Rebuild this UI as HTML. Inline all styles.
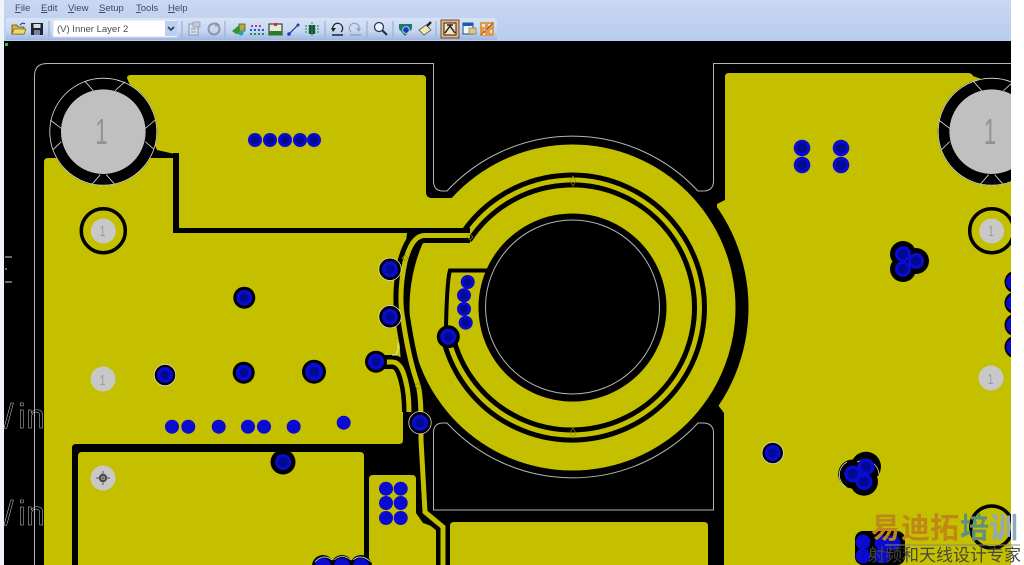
<!DOCTYPE html>
<html><head><meta charset="utf-8"><style>
html,body{margin:0;padding:0;width:1024px;height:565px;overflow:hidden;background:#fff}
svg{display:block}
text{font-family:"Liberation Sans","Noto Sans CJK SC",sans-serif}
</style></head><body>
<svg xmlns="http://www.w3.org/2000/svg" width="1024" height="565" viewBox="0 0 1024 565">
<defs>
<linearGradient id="tb" x1="0" y1="0" x2="0" y2="1"><stop offset="0" stop-color="#d8e3f7"/><stop offset=".6" stop-color="#c6d6f1"/><stop offset="1" stop-color="#9fb7e0"/></linearGradient>
<linearGradient id="mb" x1="0" y1="0" x2="0" y2="1"><stop offset="0" stop-color="#c9d8f2"/><stop offset="1" stop-color="#b9cced"/></linearGradient>
<g id="bigh">
<circle r="54" fill="#000"/>
<circle r="53.5" fill="none" stroke="#e4e4d0" stroke-width=".8"/>
<circle r="42.3" fill="#c0c0c0"/>
<g stroke="#d8d8d8" stroke-width=".8"><path d="M-18-50L-10-41M21.7-50L11.7-41M52-11.7L42-3.3M50 17L42 10M11.7 53L3 43M-11.7 53L-3 43M-53-11.7L-42-3.3M-50 17.7L-42 10"/></g>
</g>
</defs>

<!-- window bg -->
<rect width="1024" height="565" fill="#fff"/>
<rect width="1011" height="41" fill="url(#mb)"/>
<rect width="4" height="565" fill="#eef3fc"/>

<!-- canvas -->
<rect x="4" y="41" width="1007" height="524" fill="#000"/>
<rect x="5" y="43" width="3" height="3" fill="#22cc22"/>

<!-- yellow copper -->
<g fill="#c4c000">
<path d="M725 77Q725 73 729 73H968Q972 73 973 76L1011 90V565H724V413L718 405L717 204L725 200Z"/>
<circle cx="572.5" cy="307.5" r="176" fill="#000"/>
<path d="M131 75H422Q426 75 426 79V192Q426 198 432 198H470V228H179V155L157 150L127 78Q127 75 131 75Z"/>
<path d="M48 158H173V233H407L400 300L400 350L403 387L403 440Q403 444 399 444H76Q72 444 72 448V565H44V162Q44 158 48 158Z"/>
<path d="M82 452H360Q364 452 364 456V565H78V456Q78 452 82 452Z"/>
<path d="M373 475H412Q416 475 416 479V513L423 523L437 528V565H369V479Q369 475 373 475Z"/>
<path d="M454 522H704Q708 522 708 526V565H450V526Q450 522 454 522Z"/>
<circle cx="572.5" cy="307.5" r="163"/>
</g>

<!-- black separators -->
<path d="M176 230.5H420" stroke="#000" stroke-width="5" fill="none"/>
<path d="M176 153V232" stroke="#000" stroke-width="6" fill="none"/>
<path d="M470 235.5H425Q412 235 405 262Q398 295 403 320Q409 360 418 385Q421 395 421 422" stroke="#000" stroke-width="15" fill="none"/>
<path d="M376 362H392Q400 362 404 375Q409 390 409 412" stroke="#000" stroke-width="14" fill="none"/>
<path d="M421 422V440L425 512L443 527V565" stroke="#000" stroke-width="14" fill="none"/>
<path d="M442.8 337.2A132.5 132.5 0 1 0 463.8 231" stroke="#000" stroke-width="5" fill="none"/>
<path d="M452.6 334.9A122.5 122.5 0 1 0 469.4 240.5" stroke="#000" stroke-width="5" fill="none"/>
<path d="M487 270.5H450Q447 280 446 327" stroke="#000" stroke-width="4" fill="none"/>
<circle cx="572.5" cy="307.5" r="94" fill="#000"/>

<!-- thin traces -->
<path d="M470 235.5H425Q412 235 405 262Q398 295 403 320Q409 360 418 385Q421 395 421 422" stroke="#c4c000" stroke-width="5" fill="none"/>
<path d="M376 362H392Q400 362 404 375Q409 390 409 412" stroke="#c4c000" stroke-width="5" fill="none"/>
<path d="M421 422V440L425 512L443 527V565" stroke="#c4c000" stroke-width="5" fill="none"/>

<!-- outline -->
<g fill="none" stroke="#b4b4b4" stroke-width="1">
<path d="M34.5 565V76Q34.5 63.5 47 63.5H433.5V181Q433.5 191 443 191H447A171 171 0 0 1 698 191H703Q713.5 191 713.5 181V63.5H1011"/>
<path d="M698 423A171 171 0 0 1 447 423H443Q433.5 423 433.5 433V510H713.5V433Q713.5 423 703 423Z"/>
<circle cx="572.5" cy="307" r="87"/>
</g>
<!-- diamonds -->
<g fill="none" stroke="#8a8a20" stroke-width=".7">
<path d="M573 176L576 181L573 186L570 181Z"/><path d="M573 428L576 433L573 438L570 433Z"/>
<path d="M470 234L473 237L470 240L467 237Z"/>
<path d="M418 383L421 386L418 389L415 386Z"/><path d="M405 255L408 258L405 261L402 258Z"/>
</g>
<path d="M398 343V350L396 355H392" fill="none" stroke="#e8e8e8" stroke-width="1"/>

<!-- holes -->
<use href="#bigh" x="103.3" y="131.7"/>
<use href="#bigh" x="991.7" y="131.7"/>
<text transform="translate(101.5 144) scale(.62 1)" font-size="36" fill="#929292" text-anchor="middle">1</text>
<text transform="translate(990 144) scale(.62 1)" font-size="36" fill="#929292" text-anchor="middle">1</text>

<g fill="none" stroke="#000" stroke-width="3.5">
<circle cx="103.3" cy="230.7" r="22"/><circle cx="991.7" cy="230.7" r="22"/>
<circle cx="991.7" cy="527" r="21"/>
</g>
<g fill="#c8c8c8">
<circle cx="103.3" cy="231" r="12.5"/><circle cx="991.7" cy="231" r="12.5"/>
<circle cx="103" cy="379" r="12.5"/><circle cx="991" cy="378" r="12.5"/>
<circle cx="103" cy="478" r="12.5"/>
</g>
<g fill="#9a9a9a" font-size="15" text-anchor="middle">
<text transform="translate(102.5 236) scale(.7 1)">1</text><text transform="translate(991 236) scale(.7 1)">1</text>
<text transform="translate(102.5 385) scale(.7 1)">1</text><text transform="translate(990.5 384) scale(.7 1)">1</text>
</g>
<g>
<circle cx="103" cy="478" r="3.2" fill="none" stroke="#444" stroke-width="2"/>
<path d="M96 478H110M103 471V485" stroke="#555" stroke-width="1"/>
</g>

<!-- via clearances -->
<rect x="855" y="531" width="50" height="34" rx="8" fill="#000"/>
<g fill="#000">
<circle cx="244.3" cy="297.7" r="11"/>
<circle cx="390" cy="269.3" r="11"/><circle cx="390" cy="316.7" r="11"/>
<circle cx="376" cy="361.7" r="11"/><circle cx="420" cy="422.7" r="11"/>
<circle cx="448.3" cy="336.7" r="11.5"/>
<circle cx="165" cy="375" r="10.5"/><circle cx="243.7" cy="372.7" r="11"/><circle cx="314" cy="371.7" r="12"/>
<circle cx="283" cy="462" r="12.5"/>
<circle cx="903" cy="254" r="13"/><circle cx="916" cy="261" r="13"/><circle cx="903" cy="269" r="13"/>
<circle cx="772.7" cy="453" r="10.5"/>
<circle cx="852.7" cy="474" r="14.5"/><circle cx="866" cy="466.7" r="15"/><circle cx="864" cy="481.7" r="14"/>
<circle cx="1016" cy="282" r="11.5"/><circle cx="1016" cy="303" r="11.5"/><circle cx="1016" cy="325" r="11.5"/><circle cx="1016" cy="347" r="11.5"/>
<circle cx="323" cy="566" r="11"/><circle cx="342" cy="566" r="11"/><circle cx="361" cy="566" r="11"/>
</g>
<g fill="none" stroke="#d8d8d8" stroke-width=".8">
<circle cx="390" cy="269.3" r="11.2"/><circle cx="390" cy="316.7" r="11.2"/><circle cx="420" cy="422.7" r="11.2"/>
<circle cx="165" cy="375" r="10.7"/><circle cx="772.7" cy="453" r="10.7"/>
<path d="M847 462A14.5 14.5 0 0 0 846 487M857 462A15 15 0 0 1 879 474"/>
<path d="M315 562Q323 553 332 560M334 560Q342 553 351 560M353 560Q361 553 371 562"/>
</g>

<!-- vias -->
<g fill="#0a0ad0">
<circle cx="255" cy="140" r="7"/><circle cx="270" cy="140" r="7"/><circle cx="285" cy="140" r="7"/><circle cx="300" cy="140" r="7"/><circle cx="314" cy="140" r="7"/>
<circle cx="802" cy="148" r="8.3"/><circle cx="802" cy="165" r="8.3"/><circle cx="841" cy="148" r="8.3"/><circle cx="841" cy="165" r="8.3"/>
<circle cx="467.7" cy="282" r="7"/><circle cx="464" cy="295.3" r="7"/><circle cx="464" cy="309" r="7"/><circle cx="465.7" cy="322.7" r="7"/>
<circle cx="172" cy="426.7" r="7"/><circle cx="188.3" cy="426.7" r="7"/><circle cx="218.7" cy="426.7" r="7"/><circle cx="248" cy="426.7" r="7"/><circle cx="264" cy="426.7" r="7"/><circle cx="293.7" cy="426.7" r="7"/><circle cx="343.7" cy="422.7" r="7"/>
<circle cx="386" cy="488.7" r="7"/><circle cx="400.7" cy="488.7" r="7"/><circle cx="386" cy="503" r="7"/><circle cx="400.7" cy="503" r="7"/><circle cx="386" cy="518" r="7"/><circle cx="400.7" cy="518" r="7"/>
<circle cx="244.3" cy="297.7" r="8"/><circle cx="390" cy="269.3" r="8"/><circle cx="390" cy="316.7" r="8"/><circle cx="376" cy="361.7" r="8"/><circle cx="420" cy="422.7" r="8"/><circle cx="448.3" cy="336.7" r="8"/>
<circle cx="165" cy="375" r="8"/><circle cx="243.7" cy="372.7" r="8"/><circle cx="314" cy="371.7" r="9"/>
<circle cx="283" cy="462" r="8"/>
<circle cx="903" cy="254" r="8"/><circle cx="916" cy="261" r="8"/><circle cx="903" cy="269" r="8"/>
<circle cx="772.7" cy="453" r="8"/>
<circle cx="852.7" cy="474" r="8.5"/><circle cx="866" cy="466.7" r="8.5"/><circle cx="864" cy="481.7" r="8.5"/>
<circle cx="1014" cy="282" r="8"/><circle cx="1014" cy="303" r="8"/><circle cx="1014" cy="325" r="8"/><circle cx="1014" cy="347" r="8"/>
<circle cx="323" cy="566" r="8"/><circle cx="342" cy="566" r="8"/><circle cx="361" cy="566" r="8"/>
<circle cx="863" cy="542" r="7.5"/><circle cx="863" cy="556" r="7.5"/><circle cx="882" cy="543" r="7.5"/><circle cx="893" cy="543" r="7.5"/><circle cx="882" cy="556" r="7.5"/>
</g>
<g fill="#000a90">
<circle cx="255" cy="140" r="4"/><circle cx="270" cy="140" r="4"/><circle cx="285" cy="140" r="4"/><circle cx="300" cy="140" r="4"/><circle cx="314" cy="140" r="4"/>
<circle cx="802" cy="148" r="5"/><circle cx="802" cy="165" r="5"/><circle cx="841" cy="148" r="5"/><circle cx="841" cy="165" r="5"/>
<circle cx="467.7" cy="282" r="4"/><circle cx="464" cy="295.3" r="4"/><circle cx="464" cy="309" r="4"/><circle cx="465.7" cy="322.7" r="4"/>
<circle cx="244.3" cy="297.7" r="4.5"/><circle cx="390" cy="269.3" r="4.5"/><circle cx="390" cy="316.7" r="4.5"/><circle cx="376" cy="361.7" r="4.5"/><circle cx="420" cy="422.7" r="4.5"/><circle cx="448.3" cy="336.7" r="4.5"/>
<circle cx="165" cy="375" r="4.5"/><circle cx="243.7" cy="372.7" r="4.5"/><circle cx="314" cy="371.7" r="5"/>
<circle cx="283" cy="462" r="5"/>
<circle cx="903" cy="254" r="5"/><circle cx="916" cy="261" r="5"/><circle cx="903" cy="269" r="5"/>
<circle cx="772.7" cy="453" r="4.5"/>
<circle cx="852.7" cy="474" r="5"/><circle cx="866" cy="466.7" r="5"/><circle cx="864" cy="481.7" r="5"/>
</g>

<!-- left silk -->
<g fill="none" stroke="#d4d4d4" stroke-width="1">
<path d="M5 257H12M5 282H12M5 269H7"/>
</g>
<g font-size="34" fill="none" stroke="#c8c8c8" stroke-width=".5">
<text x="4 18 26" y="428">/in</text>
<text x="4 18 26" y="525">/in</text>
</g>

<!-- white margin -->
<rect x="1011" y="0" width="13" height="565" fill="#fff"/>

<!-- watermark -->
<g font-weight="bold" font-size="29">
<text x="871" y="538" fill="#bf8618">易</text>
<text x="901" y="538" fill="#bf8618">迪</text>
<text x="930" y="538" fill="#bf8618">拓</text>
<text x="960" y="538" fill="#5f8f7c">培</text>
<text x="989" y="538" fill="#8fa9bd">训</text>
</g>
<path d="M885 545H1020" stroke="#8a8a70" stroke-width="1"/>
<text x="868" y="561" font-size="17" fill="#46463f">射频和天线设计专家</text>

<!-- menu -->
<g font-size="9.5" fill="#3c4a60">
<text x="15" y="11"><tspan text-decoration="underline">F</tspan>ile</text>
<text x="41" y="11"><tspan text-decoration="underline">E</tspan>dit</text>
<text x="68" y="11"><tspan text-decoration="underline">V</tspan>iew</text>
<text x="99" y="11"><tspan text-decoration="underline">S</tspan>etup</text>
<text x="136" y="11"><tspan text-decoration="underline">T</tspan>ools</text>
<text x="168" y="11"><tspan text-decoration="underline">H</tspan>elp</text>
</g>

<!-- toolbar -->
<path d="M6 18H493Q497 18 497 22V40H6Z" fill="url(#tb)"/>
<!-- combo -->
<rect x="53" y="20" width="124" height="17" fill="#fff" stroke="#d5dff0" stroke-width="1"/>
<text x="57" y="32" font-size="9.5" fill="#4a4a55">(V) Inner Layer 2</text>
<rect x="165" y="21" width="12" height="15" fill="#bcd0ee"/>
<path d="M168 27L171 30L174 27" fill="none" stroke="#2a3a5a" stroke-width="1.6"/>
<!-- separators -->
<path d="M49 21V37M182 21V37M225 21V37M325 21V37M367 21V37M393 21V37M436 21V37" stroke="#93a8cc" stroke-width="1"/>
<!-- folder -->
<path d="M12 25H17L18 27H24V34H12Z" fill="#d8b43a" stroke="#5a4a10" stroke-width=".8"/>
<path d="M14 29H26L24 34H12Z" fill="#f0d870" stroke="#5a4a10" stroke-width=".6"/>
<path d="M20 25Q23 22 25 24" fill="none" stroke="#1a3a8a" stroke-width="1"/>
<!-- save -->
<rect x="31" y="23" width="12" height="12" fill="#1e2430"/>
<rect x="33.5" y="24" width="7" height="4" fill="#d8dce8"/>
<rect x="34" y="30" width="6" height="5" fill="#7a8499"/>
<!-- props -->
<rect x="189" y="24" width="9" height="11" fill="#dde3ee" stroke="#8a93a5"/>
<rect x="193" y="22" width="7" height="5" fill="#c3cada" stroke="#8a93a5" stroke-width=".7"/>
<path d="M191 29H196M191 32H196" stroke="#8a93a5" stroke-width="1"/>
<!-- refresh -->
<circle cx="214" cy="29" r="5.5" fill="none" stroke="#8f97a8" stroke-width="2"/>
<path d="M216 22L220 25L215 27Z" fill="#8f97a8"/>
<!-- component -->
<path d="M232 31L238 26H240V34H236Z" fill="#2f9a2f"/>
<rect x="239" y="24" width="6" height="7" fill="#b8a83a" stroke="#2a5a2a" stroke-width=".7"/>
<circle cx="241" cy="33" r="2.6" fill="#2aa0b0"/>
<!-- dots -->
<g fill="#2a5ac8">
<path d="M251 25h2v2h-2zM255 25h2v2h-2zM259 25h2v2h-2z" fill="#b04090"/>
<path d="M250 29h2v2h-2zM254 29h2v2h-2zM258 29h2v2h-2zM262 29h2v2h-2z"/>
<path d="M250 33h2v2h-2zM254 33h2v2h-2zM258 33h2v2h-2zM262 33h2v2h-2z" fill="#18905a"/>
</g>
<!-- board -->
<rect x="269" y="24" width="13" height="11" fill="#e8e8d8" stroke="#1a2a1a" stroke-width="1"/>
<rect x="269" y="31" width="13" height="4.5" fill="#2a7a2a"/>
<rect x="274" y="23" width="3" height="3" fill="#c03040"/>
<!-- line -->
<path d="M289 34L298 25" stroke="#1a3a9a" stroke-width="1.2"/>
<circle cx="289" cy="34" r="1.8" fill="#1a3ac0"/><circle cx="298" cy="25" r="1.5" fill="#1a3ac0"/>
<!-- chip -->
<rect x="309" y="25" width="6" height="9" fill="#1a4a3a"/>
<path d="M305 26H320M305 29H320M305 32H320M312 22V37" stroke="#2a8a4a" stroke-width="1" stroke-dasharray="2 1"/>
<!-- undo redo -->
<path d="M333 30A5 5 0 1 1 341 32" fill="none" stroke="#222" stroke-width="1.2"/><path d="M331 28L336 28L333 32Z" fill="#222"/>
<path d="M332 35H343" stroke="#222" stroke-width="1.5"/>
<path d="M359 30A5 5 0 1 0 351 32" fill="none" stroke="#99a2b4" stroke-width="1.2"/><path d="M361 28L356 28L359 32Z" fill="#99a2b4"/>
<path d="M350 35H361" stroke="#99a2b4" stroke-width="1.5"/>
<!-- zoom -->
<circle cx="379" cy="27" r="4.5" fill="#eef4fc" stroke="#2a3a5a" stroke-width="1.3"/>
<path d="M382.5 30.5L387 35" stroke="#1a2a4a" stroke-width="2"/>
<!-- view -->
<path d="M399 24H412V29L405 36L399 29Z" fill="#1a7a78"/>
<circle cx="406" cy="30" r="3.3" fill="#1a3ac0" stroke="#fff" stroke-width=".7"/>
<!-- brush -->
<path d="M419 30L426 25L431 30L424 35Z" fill="#f2e8b0" stroke="#555" stroke-width=".8"/>
<path d="M427 26L431 22" stroke="#222" stroke-width="2.4"/>
<!-- active button -->
<rect x="441" y="20" width="18" height="18" fill="#f6b27a" stroke="#5a5040" stroke-width="1"/>
<rect x="444" y="23" width="12" height="12" fill="#f3e4c8" stroke="#222" stroke-width="1"/>
<path d="M445 33L450 26L455 33M447 25H453" fill="none" stroke="#222" stroke-width="1.5"/>
<!-- window -->
<rect x="463" y="23" width="10" height="11" fill="#f0f4fc" stroke="#1a4a8a" stroke-width="1"/>
<rect x="463" y="23" width="10" height="3" fill="#1a5ab0"/>
<rect x="469" y="28" width="7" height="6" fill="#d8c890" stroke="#7a6a30" stroke-width=".6"/>
<!-- hatch -->
<rect x="480" y="22" width="14" height="14" fill="#dc9a50"/>
<path d="M482 24h3v3h-3zM488 24h3v2h-3zM484 29h3v2h-3zM490 30h2v3h-2zM482 33h3v2h-3z" fill="#f2e6c8"/>
<path d="M481 35L493 23" stroke="#b04a20" stroke-width="1"/>
</svg>
</body></html>
